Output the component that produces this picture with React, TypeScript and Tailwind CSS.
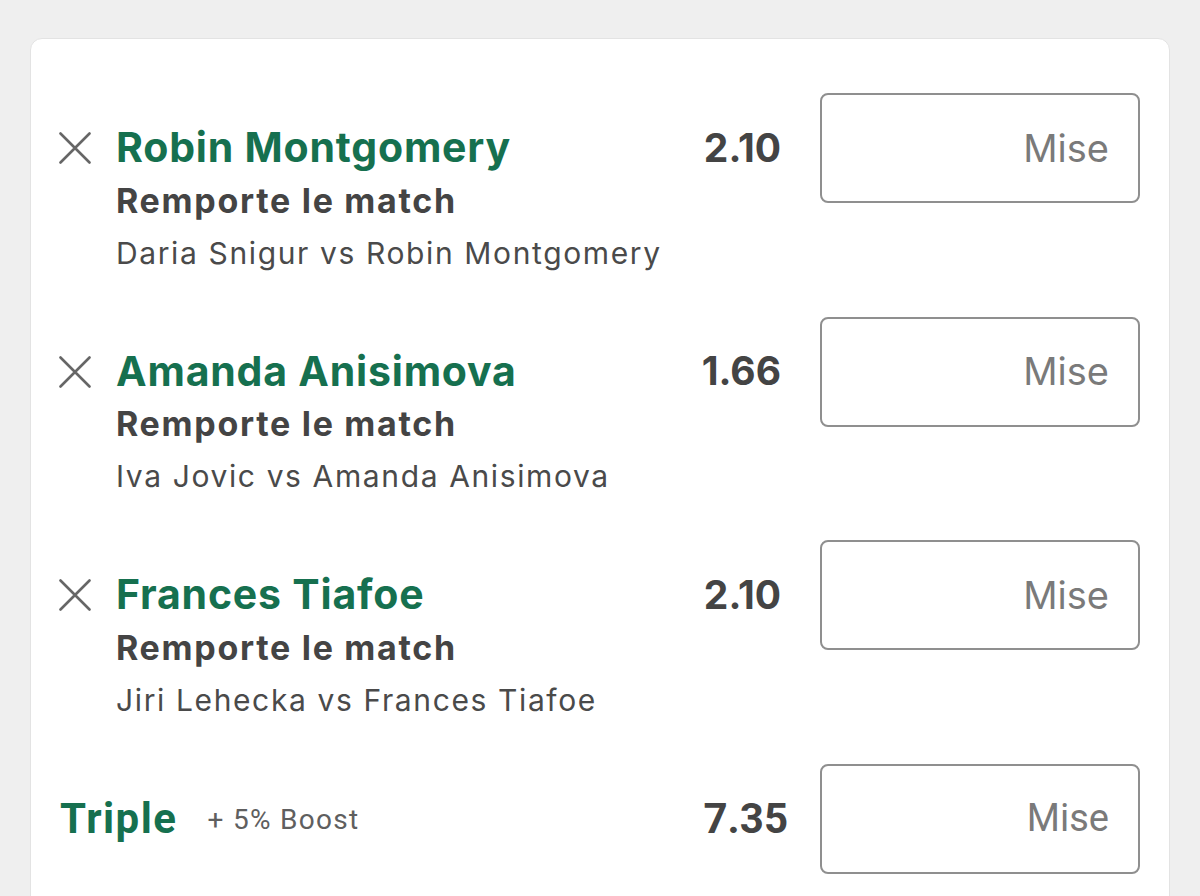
const bets = [
  { player: "Robin Montgomery", market: "Remporte le match", match: "Daria Snigur vs Robin Montgomery", odds: "2.10" },
  { player: "Amanda Anisimova", market: "Remporte le match", match: "Iva Jovic vs Amanda Anisimova", odds: "1.66" },
  { player: "Frances Tiafoe", market: "Remporte le match", match: "Jiri Lehecka vs Frances Tiafoe", odds: "2.10" },
];

function CloseIcon() {
  return (
    <svg width="32" height="32" viewBox="0 0 32 32" className="shrink-0">
      <path d="M1.5 1.5 L30.5 30.5 M30.5 1.5 L1.5 30.5" stroke="#666666" strokeWidth="2.6" strokeLinecap="round" />
    </svg>
  );
}

function StakeInput({ font }: { font: string }) {
  return (
    <div
      className={`w-[320px] h-[110px] shrink-0 border-2 border-[#8f8f8f] rounded-[8px] flex items-center justify-end pr-[29px] text-[38px] text-[#7a7a7a] ${font}`}
    >
      Mise
    </div>
  );
}

export default function App() {
  return (
    <div className="min-h-screen bg-[#efefef] pt-[38px] px-[30px] font-['Inter',sans-serif]">
      <div className="bg-white rounded-t-[12px] border border-[#e3e3e3] pt-[54px] pl-[28px] pr-[29px] pb-16 flex flex-col gap-[38.5px]">
        {bets.map((b) => (
          <div key={b.player + b.match} className="flex items-start">
            <div className="flex-1 pt-[29px] flex flex-col">
              <div className="h-[52px] flex items-center gap-[25px]">
                <CloseIcon />
                <span className="text-[41px] font-bold text-[#16704f] tracking-[0.8px]">{b.player}</span>
              </div>
              <div className="h-[52px] flex items-center pl-[57px] text-[34px] font-bold text-[#444444] tracking-[1.7px]">
                {b.market}
              </div>
              <div className="h-[52px] flex items-center pl-[57px] pt-[2px] text-[30px] text-[#4a4a4a] tracking-[1.62px]">
                {b.match}
              </div>
            </div>
            <div className="h-[110px] flex items-center mr-[39px] text-[39px] font-bold text-[#444444]">{b.odds}</div>
            <StakeInput font="font-['Inter',sans-serif]" />
          </div>
        ))}
        <div className="flex items-center font-['Roboto',sans-serif]">
          <div className="flex-1 flex items-center gap-[30px] pl-px">
            <span className="text-[42px] font-bold text-[#16704f] tracking-[1.5px]">Triple</span>
            <span className="text-[28px] text-[#5f5f5f] tracking-[1.3px] pt-[2px]">+ 5% Boost</span>
          </div>
          <div className="mr-[32px] text-[42px] font-bold text-[#444444]">7.35</div>
          <StakeInput font="font-['Roboto',sans-serif]" />
        </div>
      </div>
    </div>
  );
}
